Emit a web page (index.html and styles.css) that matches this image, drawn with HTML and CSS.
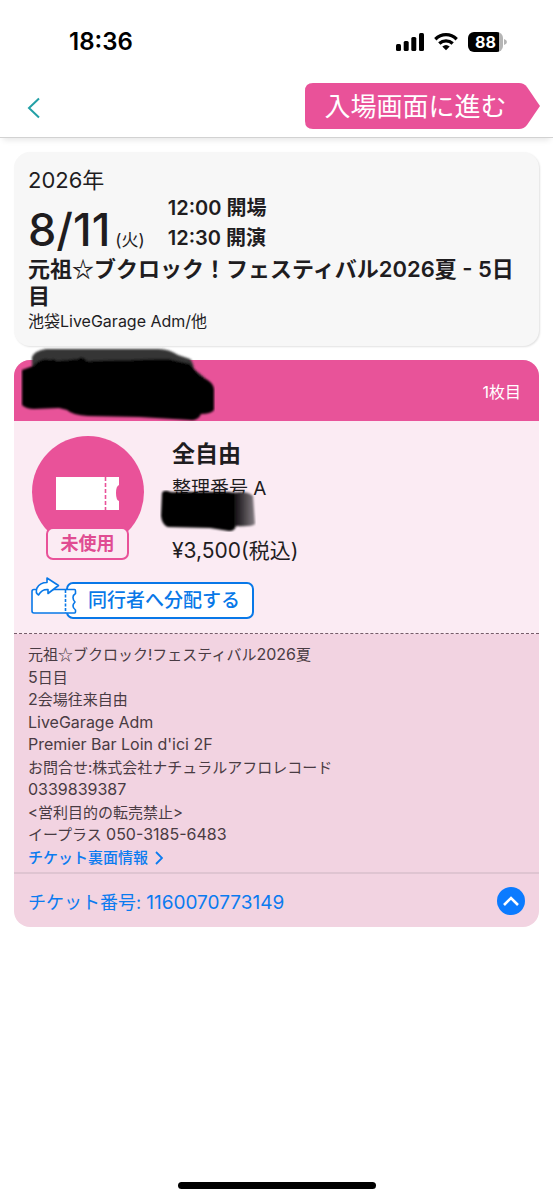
FILE: index.html
```html
<!DOCTYPE html>
<html lang="ja">
<head>
<meta charset="utf-8">
<meta name="viewport" content="width=device-width, initial-scale=1">
<title>チケット</title>
<link rel="stylesheet" href="styles.css">
</head>
<body>
<div class="screen">
  <div class="status">
    <span class="clock">18:36</span>
    <div class="status-icons">
      <svg width="28" height="20" viewBox="0 0 28 20"><rect x="0" y="12" width="5" height="7" rx="1.5"/><rect x="7.7" y="9" width="5" height="10" rx="1.5"/><rect x="15.3" y="5" width="5" height="14" rx="1.5"/><rect x="23" y="1" width="5" height="18" rx="1.5"/></svg>
      <svg width="24" height="20" viewBox="0 0 24 20" fill="none" stroke="#000" stroke-width="3.3"><path d="M1.3 7.2C7.5 1.2 16.5 1.2 22.7 7.2"/><path d="M5.3 11.5C9.2 7.9 14.8 7.9 18.7 11.5"/><path d="M12 18.3L8.3 14.6Q12 11.6 15.7 14.6Z" fill="#000" stroke="none"/></svg>
      <span class="battery">88<svg class="battery-cap" width="3" height="6" viewBox="0 0 3 6"><path d="M0 0Q3 1 3 3T0 6Z" fill="#b5b5b5"/></svg></span>
    </div>
  </div>
  <header class="nav">
    <button class="back" type="button" aria-label="戻る"><svg width="14" height="22" viewBox="0 0 14 22" fill="none" stroke="#23a0a6" stroke-width="2"><path d="M12 1.5L2 11L12 20.5"/></svg></button>
    <button class="enter" type="button">
      <svg class="enter-shape" viewBox="0 0 235 46" preserveAspectRatio="none"><path d="M8 0H214Q219 0 222 4L235 23L222 42Q219 46 214 46H8Q0 46 0 38V8Q0 0 8 0Z" fill="#e95299"/></svg>
      <span class="enter-label">入場画面に進む</span>
    </button>
  </header>
  <main class="content">
    <section class="event">
      <div class="year">2026年</div>
      <div class="when">
        <div class="date">8/11<span class="weekday">(火)</span></div>
        <div class="times"><div>12:00 開場</div><div>12:30 開演</div></div>
      </div>
      <h1 class="title">元祖<span class="star">☆</span>ブクロック！フェスティバル2026夏 - 5日目</h1>
      <div class="venue">池袋LiveGarage Adm/他</div>
    </section>
    <article class="ticket">
      <div class="ticket-head">
        <svg class="mask-name" width="194" height="74" viewBox="0 0 194 74" aria-hidden="true">
          <defs><filter id="soft" x="-5%" y="-10%" width="110%" height="120%"><feGaussianBlur stdDeviation="0.8"/></filter></defs>
          <g filter="url(#soft)">
            <path d="M11 18V10Q13 4 25 2H138Q148 2 157 8L169 12Q172 15 173 22L184 31H12Z" fill="#353535"/>
            <path d="M1 23L12 19Q20 10 29 13Q33 11 36 14L57 12Q61 8 66 14L147 12L169 17Q176 27 183 31Q192 35 193 42V63Q190 67 180 67Q177 74 169 73L118 70L67 69Q51 68 46 63L38 61L13 62Q5 62 1 58Z" fill="#000"/>
          </g>
        </svg>
        <span>1枚目</span>
      </div>
      <div class="ticket-body">
        <div class="ticket-row">
          <div class="state">
            <svg class="state-disc" width="112" height="112" viewBox="0 0 112 112"><circle cx="56" cy="56" r="56" fill="#e95299"/><path d="M24 41H87V49Q84 50 84 57T87 65V74H24Z" fill="#fff"/><path d="M73.5 41V74" stroke="#e95299" stroke-width="1.6" stroke-dasharray="4 2"/></svg>
            <span class="state-label">未使用</span>
          </div>
          <div class="seat">
            <h2 class="seat-name">全自由</h2>
            <div class="number">整理番号 A
              <svg class="mask-number" width="96" height="42" viewBox="0 0 96 42" aria-hidden="true">
                <defs><linearGradient id="fade"><stop offset="0" stop-color="#000"/><stop offset=".76" stop-color="#000"/><stop offset=".82" stop-color="#242124"/><stop offset="1" stop-color="#857d83"/></linearGradient></defs>
                <path filter="url(#soft)" d="M2 3Q3 0 8 1Q11 3 16 2H69Q73 3 80 2Q89 2 93 6L95 34Q92 37 76 36Q75 41 69 41L50 38L8 37Q2 35 1 26Z" fill="url(#fade)"/>
              </svg>
            </div>
            <div class="price">¥3,500(税込)</div>
          </div>
        </div>
        <button class="share" type="button">
          <svg class="share-icon" width="46" height="38" viewBox="0 0 46 38" fill="#fff" stroke="#0878e8" stroke-width="1.6" stroke-linejoin="round"><path d="M3 12.5H43.5Q44.5 12.5 44.5 14V16.5Q42 18 42 20.5T44 25Q42 27 42 29T44.5 33V35Q44.5 36 43.5 36H3Q1 36 1 34V14.5Q1 12.5 3 12.5Z"/><path d="M34.5 13V36" stroke-dasharray="3 1.5"/><path d="M16 1L27.5 8.5L17 16.5V12.5Q11 12 7.5 18Q4 16 6 11Q9 5.5 16 5.5Z"/></svg>
          <span class="share-label">同行者へ分配する</span>
        </button>
      </div>
      <div class="details">
        <p class="notes">元祖<span class="star">☆</span>ブクロック!フェスティバル<span class="latin">2026</span>夏<br><span class="latin">5</span>日目<br><span class="latin">2</span>会場往来自由<br><span class="latin">LiveGarage Adm</span><br><span class="latin">Premier Bar Loin d'ici 2F</span><br>お問合せ:株式会社ナチュラルアフロレコード<br><span class="latin">0339839387</span><br>&lt;営利目的の転売禁止&gt;<br>イープラス <span class="latin">050-3185-6483</span></p>
        <a class="more" href="#">チケット裏面情報<svg width="8" height="14" viewBox="0 0 8 14" fill="none" stroke="currentColor" stroke-width="1.8"><path d="M1 1L7 7L1 13"/></svg></a>
      </div>
      <footer class="ticket-foot">
        <a class="ticket-id" href="#">チケット番号: <span class="id-digits">1160070773149</span></a>
        <button class="fold" type="button" aria-label="閉じる"><svg width="28" height="28" viewBox="0 0 28 28" fill="none"><circle cx="14" cy="14" r="14" fill="#0b7bff"/><path d="M7 18L14 11L21 18" stroke="#fff" stroke-width="2.6"/></svg></button>
      </footer>
    </article>
  </main>
  <div class="home-bar"></div>
</div>
</body>
</html>
```
FILE: styles.css
```css
* { box-sizing: border-box; }
body { margin: 0; background: #fff; color: #1f1d1f; font-family: Inter, "Noto Sans CJK JP", sans-serif; font-size: 15px; }
button { border: 0; padding: 0; margin: 0; background: none; font: inherit; cursor: pointer; }
a { text-decoration: none; color: #0b7bf0; }
h1, h2, p { margin: 0; }
svg { display: block; flex: none; }
.star { font-family: "Noto Sans CJK JP", sans-serif; line-height: 1; }
.latin { font-size: 16px; line-height: 1; }
.screen { min-height: 100vh; display: flex; flex-direction: column; }
.status { height: 78px; padding: 5px 47px 0 69px; display: flex; align-items: center; justify-content: space-between; color: #000; }
.clock { font-size: 24px; font-weight: 600; line-height: 32px; }
.status-icons { display: flex; align-items: center; gap: 10px; }
.battery { position: relative; width: 35px; height: 20px; margin-right: 3px; border-radius: 6px; background: linear-gradient(to right, #000 88%, #b5b5b5 88%); color: #fff; font-size: 16px; font-weight: 700; line-height: 20px; text-align: center; }
.battery-cap { position: absolute; right: -4px; top: 7px; }
.nav { height: 60px; padding: 0 13px 3px 27px; display: flex; align-items: center; justify-content: space-between; border-bottom: 1px solid #d2d2d2; box-shadow: 0 5px 6px -3px rgba(0, 0, 0, .1); }
.back { height: 44px; padding-top: 3px; }
.enter { position: relative; width: 235px; height: 46px; padding-right: 14px; color: #fff; }
.enter-shape { position: absolute; inset: 0; width: 100%; height: 100%; }
.enter-label { position: relative; font-size: 26px; line-height: 48px; }
.content { padding: 14px 14px 0; display: flex; flex-direction: column; gap: 14px; }
.event { padding: 12px 14px 13px; border-radius: 16px; background: #f7f7f7; box-shadow: 1px 1px 2px rgba(0, 0, 0, .12); }
.year { font-size: 22px; line-height: 32px; }
.when { display: flex; align-items: flex-end; gap: 23px; height: 60px; }
.date { display: flex; align-items: baseline; gap: 5px; padding-bottom: 4px; font-size: 45px; font-weight: 500; line-height: 44px; white-space: nowrap; }
.weekday { font-size: 17px; font-weight: 400; line-height: 20px; }
.times { padding-bottom: 3px; font-size: 20px; font-weight: 600; line-height: 30px; }
.title { font-size: 22px; font-weight: 600; line-height: 27px; }
.venue { font-size: 16px; line-height: 23px; }
.ticket { border-radius: 16px; background: #f2d3e1; }
.ticket-head { position: relative; height: 61px; padding: 0 18px; display: flex; align-items: center; justify-content: flex-end; border-radius: 16px 16px 0 0; background: #e85399; color: #fff; font-size: 16px; }
.mask-name { position: absolute; left: 7px; top: -13px; }
.ticket-body { padding: 15px 17px 14px; background: #fbebf3; border-bottom: 1px dashed #755c69; }
.ticket-row { display: flex; align-items: flex-start; gap: 28px; }
.state { width: 113px; display: flex; flex-direction: column; align-items: center; }
.state-disc { margin-bottom: -21px; }
.state-label { z-index: 1; width: 83px; height: 33px; border: 2px solid #e95299; border-radius: 7px; background: #fbebf3; color: #e04c92; font-size: 18px; font-weight: 600; line-height: 29px; text-align: center; }
.seat-name { font-size: 23px; font-weight: 600; line-height: 36px; }
.number { position: relative; margin: 2px 0 32px; font-size: 19px; line-height: 30px; }
.mask-number { position: absolute; left: -12px; top: 16px; }
.price { font-size: 21px; line-height: 30px; }
.share { margin-top: 11px; display: flex; align-items: flex-end; color: #0878e8; }
.share-icon { z-index: 1; margin: 0 -11px 4px 0; }
.share-label { height: 37px; padding: 0 12px 0 20px; border: 2px solid #0878e8; border-radius: 7px; background: #fff; font-size: 19px; font-weight: 500; line-height: 33px; }
.details { padding: 10px 14px 3px; border-bottom: 2px solid #dfc4d1; color: #493b43; line-height: 1.5; }
.more { display: inline-flex; align-items: center; gap: 7px; font-weight: 500; }
.ticket-foot { min-height: 53px; padding: 0 14px; display: flex; align-items: center; justify-content: space-between; }
.ticket-id { font-size: 18px; }
.id-digits { font-size: 19px; }
.home-bar { width: 198px; height: 7px; margin: auto auto 11px; border-radius: 4px; background: #000; }
```
